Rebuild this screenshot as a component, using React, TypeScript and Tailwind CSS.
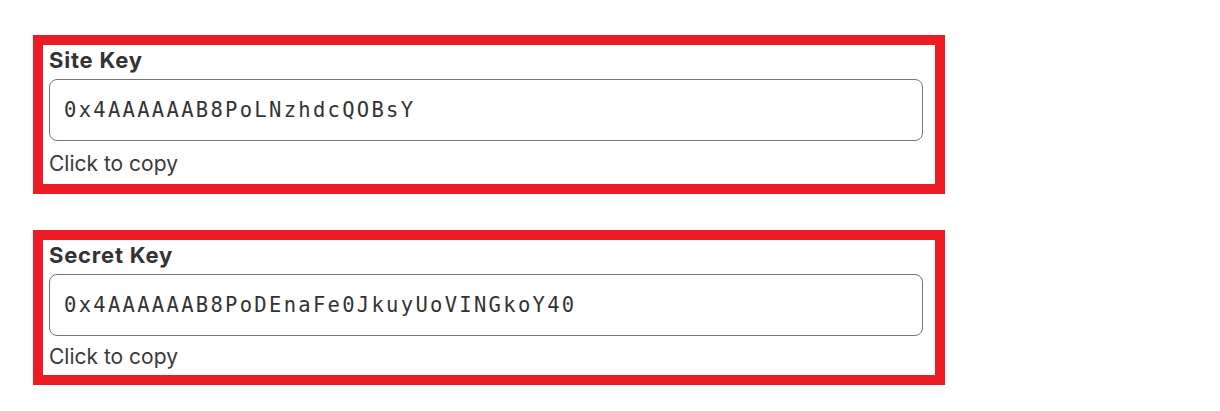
import React from "react";

function KeyBox({
  label,
  value,
  captionMt,
  pb,
  mt,
}: {
  label: string;
  value: string;
  captionMt: string;
  pb: string;
  mt: string;
}) {
  return (
    <div className={`w-[912px] border-[10px] border-[#ed1c24] bg-white pl-[6px] pr-[12px] ${pb} ${mt}`}>
      <div className="font-[Inter] text-[22px] leading-[30px] font-bold tracking-[0.8px] text-[#333333]">
        {label}
      </div>
      <div className="mt-[4px] flex h-[62px] items-center rounded-[8px] border border-[#767676] pl-[14px]">
        <span className="font-['DejaVu_Sans_Mono'] text-[20.5px] leading-none tracking-[2.3px] text-[#333333]">
          {value}
        </span>
      </div>
      <div className={`${captionMt} font-[Inter] text-[21px] leading-[30px] text-[#3a3a3a]`}>
        Click to copy
      </div>
    </div>
  );
}

export default function App() {
  return (
    <div className="min-h-[411px] w-[1220px] bg-white pt-[35px] pl-[33px]">
      <KeyBox label="Site Key" value="0x4AAAAAAB8PoLNzhdcQOBsY" captionMt="mt-[8px]" pb="pb-[5px]" mt="mt-0" />
      <KeyBox
        label="Secret Key"
        value="0x4AAAAAAB8PoDEnaFe0JkuyUoVINGkoY40"
        captionMt="mt-[6px]"
        pb="pb-[3px]"
        mt="mt-[36px]"
      />
    </div>
  );
}
